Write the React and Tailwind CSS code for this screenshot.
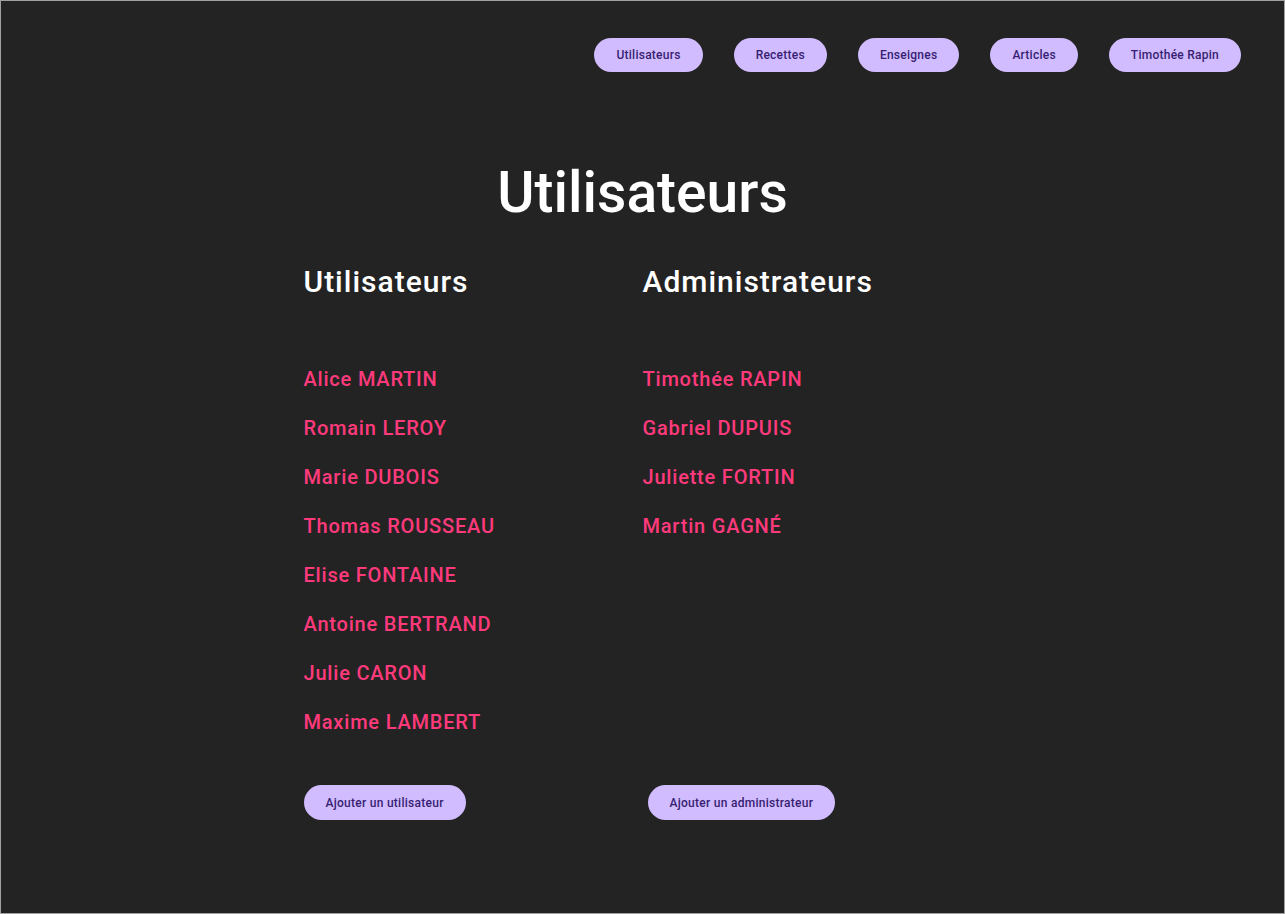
export default function App() {
  const navItems = ["Utilisateurs", "Recettes", "Enseignes", "Articles", "Timothée Rapin"];
  const users = [
    "Alice MARTIN",
    "Romain LEROY",
    "Marie DUBOIS",
    "Thomas ROUSSEAU",
    "Elise FONTAINE",
    "Antoine BERTRAND",
    "Julie CARON",
    "Maxime LAMBERT",
  ];
  const admins = ["Timothée RAPIN", "Gabriel DUPUIS", "Juliette FORTIN", "Martin GAGNÉ"];
  return (
    <div className="min-h-[914px] h-[914px] bg-[#232323] border border-[#a0a0a0] font-['Roboto',sans-serif] box-border">
      <nav className="flex justify-end gap-[31px] pt-[37px] pr-[43px]">
        {navItems.map((n) => (
          <button
            key={n}
            className="h-[34px] px-[22px] rounded-full bg-[#d0bcff] text-[#381e72] text-[12px] font-medium tracking-[0.25px] leading-none"
          >
            {n}
          </button>
        ))}
      </nav>
      <h1 className="text-center text-white text-[57px] font-medium leading-[66px] mt-[88px]">Utilisateurs</h1>
      <div className="grid grid-cols-2 w-[678px] mx-auto mt-[38px]">
        <div className="flex flex-col">
          <h2 className="text-white text-[30px] font-medium tracking-[1px] leading-[36px]">Utilisateurs</h2>
          <ul className="mt-[55px] flex flex-col">
            {users.map((u) => (
              <li key={u} className="text-[#ff3a7c] text-[20px] font-medium tracking-[0.8px] leading-[49px]">
                {u}
              </li>
            ))}
          </ul>
          <div className="mt-[38px]">
            <button className="h-[35px] px-[22px] rounded-full bg-[#d0bcff] text-[#381e72] text-[12px] font-medium tracking-[0.27px] leading-none">
              Ajouter un utilisateur
            </button>
          </div>
        </div>
        <div className="flex flex-col">
          <h2 className="text-white text-[30px] font-medium tracking-[1px] leading-[36px]">Administrateurs</h2>
          <ul className="mt-[55px] flex flex-col h-[392px]">
            {admins.map((u) => (
              <li key={u} className="text-[#ff3a7c] text-[20px] font-medium tracking-[0.8px] leading-[49px]">
                {u}
              </li>
            ))}
          </ul>
          <div className="mt-[38px] ml-[5px]">
            <button className="h-[35px] px-[22px] rounded-full bg-[#d0bcff] text-[#381e72] text-[12px] font-medium tracking-[0.27px] leading-none">
              Ajouter un administrateur
            </button>
          </div>
        </div>
      </div>
    </div>
  );
}
